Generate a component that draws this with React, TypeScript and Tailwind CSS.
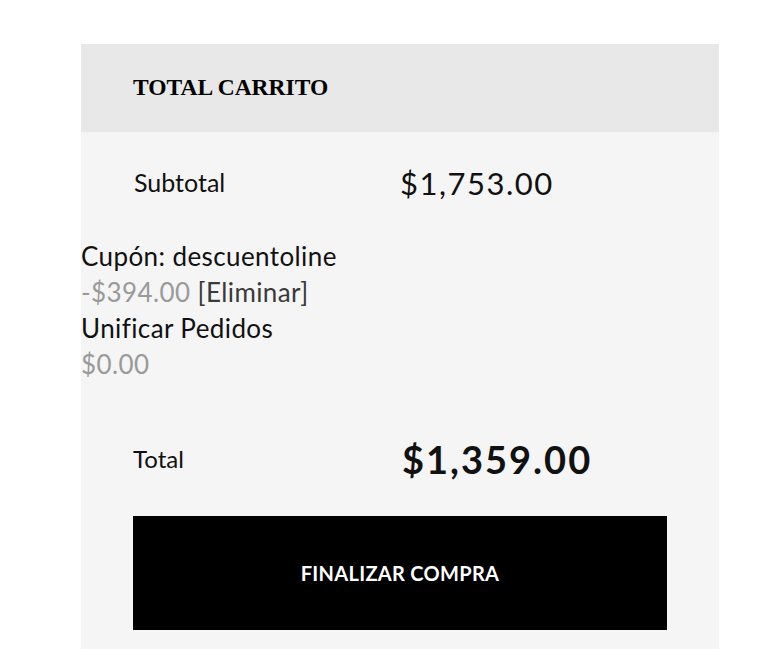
import React from "react";

export default function App() {
  const sans = { fontFamily: "Lato, 'Liberation Sans', sans-serif" };
  return (
    <div className="min-h-[649px] w-[768px] bg-white pt-[44px]" style={sans}>
      <div className="ml-[81px] w-[638px] bg-[#f5f5f5] pb-[30px]">
        <div className="flex h-[88px] items-center bg-[#e8e8e8] pl-[52px]">
          <h2
            className="text-[23.5px] font-bold leading-none text-black"
            style={{ fontFamily: "'Liberation Serif', 'Times New Roman', serif" }}
          >
            TOTAL CARRITO
          </h2>
        </div>

        <div className="flex h-[102px] items-center text-[#111]">
          <div className="w-[319px] pl-[53px] text-[25px]">Subtotal</div>
          <div className="text-[31px] tracking-[1.5px]">$1,753.00</div>
        </div>

        <div className="pt-[4px] text-[26px] leading-[36px] tracking-[0.4px] text-[#111]">
          <div>Cupón: descuentoline</div>
          <div>
            <span className="text-[#9a9a9a]">-$394.00</span>{" "}
            <span className="text-[#3a3a3a]">[Eliminar]</span>
          </div>
          <div>Unificar Pedidos</div>
          <div className="text-[#9a9a9a]">$0.00</div>
        </div>

        <div className="flex h-[134px] items-center pt-[20px] text-[#111]">
          <div className="w-[321px] pl-[52px] text-[24px]">Total</div>
          <div className="text-[38px] font-bold tracking-[2px]">$1,359.00</div>
        </div>

        <div className="mx-[52px] flex h-[114px] items-center justify-center bg-black">
          <span className="text-[20px] font-bold tracking-[0.3px] text-white">FINALIZAR COMPRA</span>
        </div>
      </div>
    </div>
  );
}
